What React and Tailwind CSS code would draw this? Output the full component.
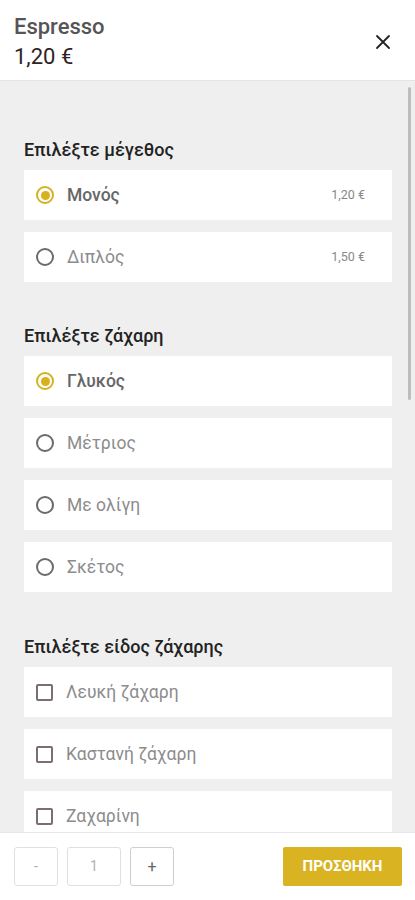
import React from 'react';

const sizes = [
  { id: 'single', label: 'Μονός', price: '1,20 €', checked: true },
  { id: 'double', label: 'Διπλός', price: '1,50 €' },
];

const sugar = [
  { id: 'sweet', label: 'Γλυκός', checked: true },
  { id: 'medium', label: 'Μέτριος' },
  { id: 'little', label: 'Με ολίγη' },
  { id: 'plain', label: 'Σκέτος' },
];

const sugarTypes = [
  { id: 'white', label: 'Λευκή ζάχαρη' },
  { id: 'brown', label: 'Καστανή ζάχαρη' },
  { id: 'saccharin', label: 'Ζαχαρίνη' },
];

const Radio = ({ checked }) =>
  checked ? (
    <span className="flex h-[18px] w-[18px] shrink-0 items-center justify-center rounded-full border-2 border-[#d6b21e]">
      <span className="h-[9px] w-[9px] rounded-full bg-[#d6b21e]" />
    </span>
  ) : (
    <span className="h-[18px] w-[18px] shrink-0 rounded-full border-2 border-[#6b6b6b]" />
  );

const Checkbox = () => (
  <span className="h-[17px] w-[17px] shrink-0 rounded-[2px] border-2 border-[#7b6d70]" />
);

const Option = ({ item, type }) => (
  <div className="flex h-[50px] items-center bg-white pl-[12px] pr-[27px]">
    {type === 'radio' ? <Radio checked={item.checked} /> : <Checkbox />}
    <span
      className={
        'ml-[13px] flex-1 text-[17.5px] ' +
        (item.checked ? 'font-medium text-[#666]' : 'text-[#8c8c8c]')
      }
    >
      {item.label}
    </span>
    {item.price && <span className="text-[12.5px] text-[#888]">{item.price}</span>}
  </div>
);

const Section = ({ title, items, type, className = '' }) => (
  <section className={className}>
    <h3 className="mb-[10px] h-5 text-[18px] font-medium leading-5 text-[#222]">{title}</h3>
    <div className="flex flex-col gap-[12px]">
      {items.map((item) => (
        <Option key={item.id} item={item} type={type} />
      ))}
    </div>
  </section>
);

export default function App() {
  return (
    <div
      className="flex h-[900px] w-[415px] flex-col overflow-hidden bg-white"
      style={{ fontFamily: 'Roboto, "Noto Sans", sans-serif' }}
    >
      <header className="flex h-[81px] shrink-0 items-center justify-between border-b border-[#e4e4e4] pl-[14px] pr-[24px] pt-[3px]">
        <div className="flex flex-col">
          <span className="text-[22px] font-medium leading-[30px] text-[#555]">Espresso</span>
          <span className="text-[22px] leading-[30px] text-[#2e2424]">1,20 €</span>
        </div>
        <svg width="16" height="16" viewBox="0 0 16 16" className="text-[#222]">
          <path d="M2 2L14 14M14 2L2 14" stroke="currentColor" strokeWidth="1.8" strokeLinecap="round" />
        </svg>
      </header>

      <main className="relative flex-1 overflow-hidden bg-[#efefef] pl-[24px] pr-[23px] pt-[59px]">
        <Section title="Επιλέξτε μέγεθος" items={sizes} type="radio" />
        <Section title="Επιλέξτε ζάχαρη" items={sugar} type="radio" className="mt-[44px]" />
        <Section title="Επιλέξτε είδος ζάχαρης" items={sugarTypes} type="checkbox" className="mt-[45px]" />
        <div className="absolute right-[4px] top-[6px] h-[313px] w-[3px] rounded-full bg-[#bdbdbd]" />
      </main>

      <footer className="flex h-[68px] shrink-0 items-center justify-between border-t border-[#e6e6e6] bg-white pl-[14px] pr-[13px]">
        <div className="flex gap-[9px]">
          <button className="flex h-[39px] w-[44px] items-center justify-center rounded-[3px] border border-[#e0e0e0] text-[14px] text-[#b0b0b0]">
            -
          </button>
          <div className="flex h-[39px] w-[54px] items-center justify-center rounded-[3px] border border-[#e0e0e0] text-[14px] text-[#b0b0b0]">
            1
          </div>
          <button className="flex h-[39px] w-[44px] items-center justify-center rounded-[3px] border border-[#cfcfcf] text-[16px] text-[#666]">
            +
          </button>
        </div>
        <button className="flex h-[39px] w-[119px] items-center justify-center rounded-[2px] bg-[#d9b322] text-[15px] font-bold text-white">
          ΠΡΟΣΘΗΚΗ
        </button>
      </footer>
    </div>
  );
}
